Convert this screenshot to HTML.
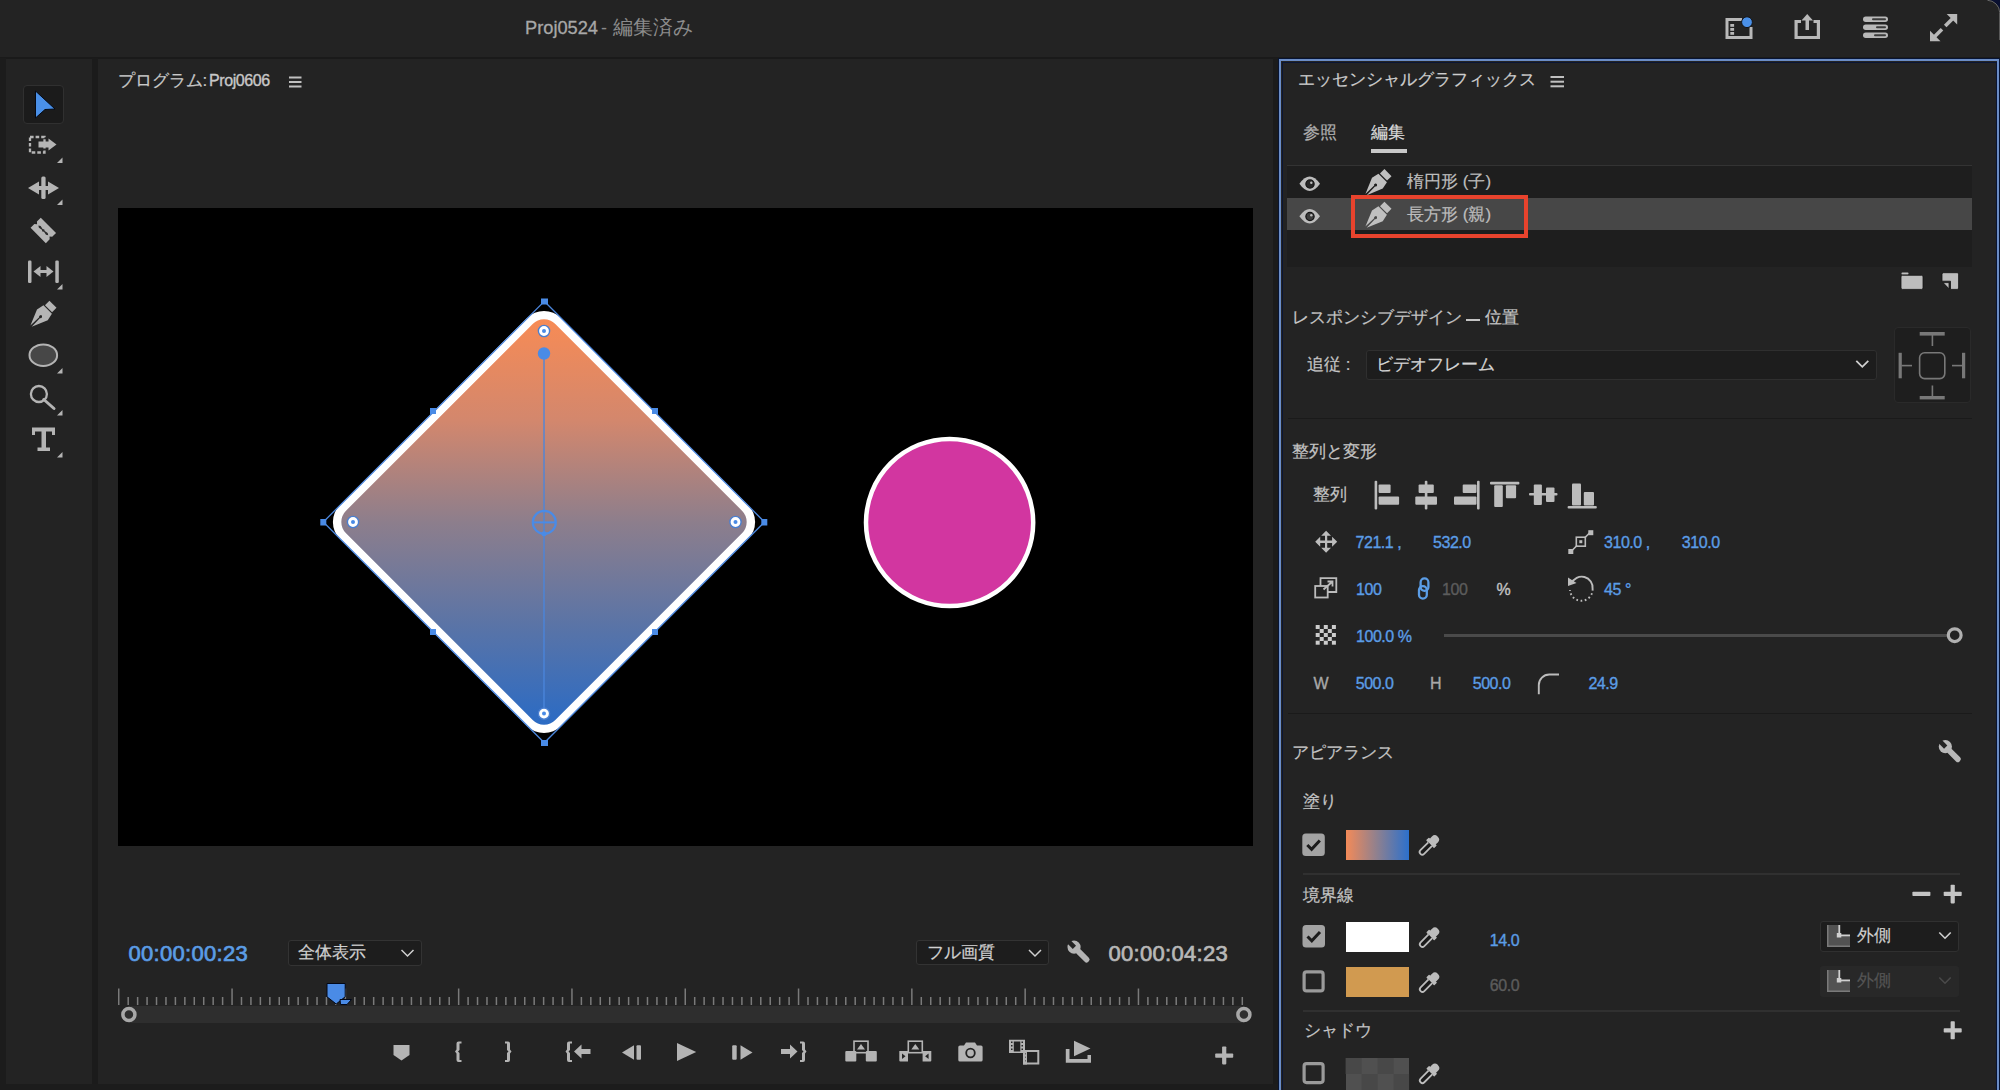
<!DOCTYPE html>
<html lang="ja">
<head>
<meta charset="utf-8">
<style>
*{box-sizing:border-box;margin:0;padding:0}
html,body{width:2000px;height:1090px;overflow:hidden;background:#232323}
body{position:relative;font-family:"Liberation Sans",sans-serif;color:#c4c4c4}
.a{position:absolute}
.t{position:absolute;white-space:nowrap;line-height:1}
svg{position:absolute;overflow:visible}
.blue{color:#5b9de6}
.num{-webkit-text-stroke:0.35px currentColor;letter-spacing:-0.45px}
.lb{-webkit-text-stroke:0.2px currentColor}
</style>
</head>
<body>
<!-- title bar -->
<div class="a" style="left:0;top:0;width:2000px;height:58px;background:#232323"></div>
<div class="a" style="left:0;top:57px;width:2000px;height:2px;background:#1a1a1a"></div>
<div class="t" style="left:524.5px;top:18px;font-size:19px;color:#a8a8a8;-webkit-text-stroke:0.3px #a8a8a8;transform:scaleX(0.96);transform-origin:0 0">Proj0524</div>
<div class="t" style="left:601px;top:19px;font-size:18px;color:#8a8a8a">-</div>
<div class="t" style="left:613px;top:18px;font-size:19.7px;color:#8c8c8c">編集済み</div>

<!-- left strip & dividers -->
<div class="a" style="left:0;top:58px;width:6px;height:1032px;background:#1c1c1c"></div>
<div class="a" style="left:92px;top:58px;width:6px;height:1032px;background:#1b1b1b"></div>
<div class="a" style="left:1273px;top:58px;width:6px;height:1032px;background:#1b1b1b"></div>
<div class="a" style="left:0;top:1084px;width:1279px;height:6px;background:#1c1c1c"></div>


<!-- toolbar -->
<div class="a" style="left:23px;top:85px;width:41px;height:39px;background:#1b1b1b;border:1px solid #303030;border-radius:4px"></div>
<svg style="left:0;top:0" width="100" height="470" viewBox="0 0 100 470">
 <g fill="#b4b4b4" stroke="none">
  <polygon points="35.5,91 55,109 45,109.5 35.5,118" fill="#4a90e8" stroke="#050a14" stroke-width="1"/>
  <!-- track select -->
  <rect x="30" y="137" width="14.5" height="15.5" fill="none" stroke="#b4b4b4" stroke-width="2.3" stroke-dasharray="3.6 2"/>
  <rect x="38.5" y="141.5" width="11" height="6"/>
  <polygon points="48.5,138.5 56.5,144.5 48.5,150.5"/>
  <polygon points="57,163 62.5,163 62.5,157.5"/>
  <!-- ripple -->
  <polygon points="28,188 39,181.5 39,194.5"/>
  <polygon points="59,188 48,181.5 48,194.5"/>
  <rect x="37" y="186" width="13" height="4"/>
  <rect x="41.3" y="176.5" width="4.3" height="22.5" rx="1.5"/>
  <polygon points="57,205 62.5,205 62.5,199.5"/>
  <!-- razor -->
  <g transform="translate(43.3,230.4) rotate(45)">
   <path d="M-10.8,-7.2 H10.8 V-1.8 L8.8,0 L10.8,1.8 V7.2 H-10.8 V1.8 L-8.8,0 L-10.8,-1.8 Z"/>
   <path d="M-7,0 L-5,-1.2 L-1.5,-0.5 L0,-1.4 L1.5,-0.5 L5,-1.2 L7,0 L5,1.2 L1.5,0.5 L0,1.4 L-1.5,0.5 L-5,1.2 Z" fill="#2a2a2a"/>
  </g>
  <!-- slip -->
  <rect x="28" y="260.5" width="3.5" height="22.5" rx="1.2"/>
  <rect x="55.3" y="260.5" width="3.5" height="22.5" rx="1.2"/>
  <polygon points="33.5,271.5 40.5,266 40.5,277"/>
  <polygon points="53.5,271.5 46.5,266 46.5,277"/>
  <rect x="40" y="270" width="7" height="3"/>
  <polygon points="57,289.5 62.5,289.5 62.5,284"/>
  <!-- pen -->
  <g transform="translate(40.6,316.6) rotate(45)">
   <rect x="-5" y="-17.5" width="10" height="6.3"/>
   <path d="M-6,-10 H6 L7.6,-2.5 L0.9,13.5 L0.6,1.4 A1.5,1.5 0 1 0 -0.6,1.4 L-0.9,13.5 L-7.6,-2.5 Z"/>
  </g>
  <!-- ellipse -->
  <ellipse cx="43.3" cy="355.2" rx="13.8" ry="10.8" fill="#474747" stroke="#b4b4b4" stroke-width="2"/>
  <polygon points="57,373.5 62.5,373.5 62.5,368"/>
  <!-- zoom -->
  <circle cx="38.9" cy="394" r="8" fill="none" stroke="#b4b4b4" stroke-width="2.3"/>
  <line x1="43.8" y1="399.5" x2="54" y2="408.5" stroke="#b4b4b4" stroke-width="3" stroke-linecap="round"/>
  <polygon points="57,415.5 62.5,415.5 62.5,410"/>
  <!-- type -->
  <path d="M32,427.5 H55 V435 H52 V431.5 H46 V447.5 H50 V451 H37.5 V447.5 H41.5 V431.5 H35 V435 H32 Z"/>
  <polygon points="57,457.5 62.5,457.5 62.5,452"/>
 </g>
</svg>



<!-- program panel -->
<div class="t lb" style="left:117.5px;top:71.5px;font-size:17px;color:#c8c8c8">プログラム:</div><div class="t" style="left:209px;top:73px;font-size:16px;color:#c8c8c8;letter-spacing:-0.4px;-webkit-text-stroke:0.35px #c8c8c8">Proj0606</div>
<div class="a" style="left:118px;top:208px;width:1135px;height:638px;background:#000"></div>
<svg style="left:0;top:0" width="1280" height="1090" viewBox="0 0 1280 1090">
 <defs>
  <linearGradient id="dg" x1="0" y1="319" x2="0" y2="725" gradientUnits="userSpaceOnUse">
   <stop offset="0" stop-color="#f78b55"/>
   <stop offset="0.25" stop-color="#d3876d"/>
   <stop offset="0.5" stop-color="#8d7e8c"/>
   <stop offset="0.75" stop-color="#5b74a6"/>
   <stop offset="1" stop-color="#2b6bc4"/>
  </linearGradient>
  <linearGradient id="sw" x1="0" y1="0" x2="1" y2="0">
   <stop offset="0" stop-color="#f58a54"/>
   <stop offset="0.5" stop-color="#8b7f90"/>
   <stop offset="1" stop-color="#2a6ecf"/>
  </linearGradient>
 </defs>
 <!-- hamburger -->
 <g fill="#c0c0c0"><rect x="289" y="76.5" width="12.5" height="2"/><rect x="289" y="81" width="12.5" height="2"/><rect x="289" y="85.5" width="12.5" height="2"/></g>
 <!-- diamond -->
 <g transform="translate(544,522) rotate(45)">
  <rect x="-156.3" y="-156.3" width="312.6" height="312.6" rx="24" fill="#fff"/>
 </g>
 <clipPath id="dclip"><rect x="-148" y="-148" width="296" height="296" rx="16" transform="translate(544,522) rotate(45)"/></clipPath>
 <rect x="320" y="300" width="450" height="450" fill="url(#dg)" clip-path="url(#dclip)"/>
 <!-- bbox lines -->
 <polygon points="544.3,301.3 764.5,522 544.3,742.8 323.3,522" fill="none" stroke="#4b86dc" stroke-width="1.3"/>
 <g fill="#4a8be6">
  <rect x="541" y="298.5" width="7" height="6"/>
  <rect x="320.3" y="519" width="6" height="6.5"/>
  <rect x="761.3" y="519" width="6" height="6.5"/>
  <rect x="541" y="740" width="7" height="6"/>
  <rect x="430" y="408" width="6" height="6"/>
  <rect x="652" y="408" width="6" height="6"/>
  <rect x="430" y="629" width="6" height="6"/>
  <rect x="652" y="629" width="6" height="6"/>
 </g>
 <!-- gradient line -->
 <line x1="544" y1="354" x2="544" y2="713" stroke="#4b86dc" stroke-width="1.6" opacity="0.85"/>
 <circle cx="544" cy="353.5" r="6.2" fill="#4a8be6"/>
 <circle cx="544.3" cy="522.4" r="11.5" fill="none" stroke="#4a8be6" stroke-width="2.2"/>
 <line x1="533" y1="522.4" x2="555.5" y2="522.4" stroke="#4a8be6" stroke-width="2"/>
 <circle cx="544" cy="533.7" r="2.5" fill="#4a8be6"/>
 <g fill="#fff" stroke="#4a7fd0" stroke-width="1.4">
  <circle cx="544" cy="331" r="5.6"/><circle cx="353" cy="522" r="5.6"/><circle cx="735.5" cy="522" r="5.6"/><circle cx="544" cy="713.6" r="5.6"/>
 </g>
 <g fill="#4a8be6"><circle cx="544" cy="331" r="2"/><circle cx="353" cy="522" r="2"/><circle cx="735.5" cy="522" r="2"/><circle cx="544" cy="713.6" r="2"/></g>
 <!-- circle -->
 <circle cx="949.6" cy="522.5" r="83.6" fill="#d236a0" stroke="#fff" stroke-width="4.5"/>
</svg>



<!-- program bottom -->
<div class="t" style="left:128.5px;top:943px;font-size:22px;color:#5b9de6;-webkit-text-stroke:0.7px #5b9de6;letter-spacing:0.3px">00:00:00:23</div>
<div class="a" style="left:287.5px;top:940px;width:134.5px;height:25.5px;background:#1d1d1d;border:1px solid #333;border-radius:3px"></div>
<div class="t lb" style="left:298px;top:944px;font-size:17px;color:#d0d0d0">全体表示</div>
<div class="a" style="left:915.5px;top:939.5px;width:133.5px;height:25.5px;background:#1d1d1d;border:1px solid #333;border-radius:3px"></div>
<div class="t lb" style="left:926.5px;top:944px;font-size:17px;color:#d0d0d0">フル画質</div>
<div class="t" style="left:1108.5px;top:943px;font-size:22px;color:#b8b8b8;-webkit-text-stroke:0.7px #b8b8b8;letter-spacing:0.3px">00:00:04:23</div>
<div class="a" style="left:129px;top:1006px;width:1115px;height:17px;background:#2e2e2e"></div>
<svg style="left:0;top:0" width="1280" height="1090" viewBox="0 0 1280 1090">
 <g fill="none" stroke="#d0d0d0" stroke-width="1.5"><polyline points="401.5,950 407.5,956 413.5,950"/><polyline points="1029,950 1035,956 1041,950"/></g>
 <g fill="#7a7a7a"><rect x="118.00" y="988.5" width="1.5" height="16.5"/><rect x="127.44" y="997" width="1.5" height="8.0"/><rect x="136.88" y="997" width="1.5" height="8.0"/><rect x="146.32" y="997" width="1.5" height="8.0"/><rect x="155.77" y="997" width="1.5" height="8.0"/><rect x="165.21" y="997" width="1.5" height="8.0"/><rect x="174.65" y="997" width="1.5" height="8.0"/><rect x="184.09" y="997" width="1.5" height="8.0"/><rect x="193.53" y="997" width="1.5" height="8.0"/><rect x="202.97" y="997" width="1.5" height="8.0"/><rect x="212.42" y="997" width="1.5" height="8.0"/><rect x="221.86" y="997" width="1.5" height="8.0"/><rect x="231.30" y="988.5" width="1.5" height="16.5"/><rect x="240.74" y="997" width="1.5" height="8.0"/><rect x="250.18" y="997" width="1.5" height="8.0"/><rect x="259.62" y="997" width="1.5" height="8.0"/><rect x="269.07" y="997" width="1.5" height="8.0"/><rect x="278.51" y="997" width="1.5" height="8.0"/><rect x="287.95" y="997" width="1.5" height="8.0"/><rect x="297.39" y="997" width="1.5" height="8.0"/><rect x="306.83" y="997" width="1.5" height="8.0"/><rect x="316.27" y="997" width="1.5" height="8.0"/><rect x="325.72" y="997" width="1.5" height="8.0"/><rect x="335.16" y="997" width="1.5" height="8.0"/><rect x="344.60" y="988.5" width="1.5" height="16.5"/><rect x="354.04" y="997" width="1.5" height="8.0"/><rect x="363.48" y="997" width="1.5" height="8.0"/><rect x="372.92" y="997" width="1.5" height="8.0"/><rect x="382.37" y="997" width="1.5" height="8.0"/><rect x="391.81" y="997" width="1.5" height="8.0"/><rect x="401.25" y="997" width="1.5" height="8.0"/><rect x="410.69" y="997" width="1.5" height="8.0"/><rect x="420.13" y="997" width="1.5" height="8.0"/><rect x="429.57" y="997" width="1.5" height="8.0"/><rect x="439.02" y="997" width="1.5" height="8.0"/><rect x="448.46" y="997" width="1.5" height="8.0"/><rect x="457.90" y="988.5" width="1.5" height="16.5"/><rect x="467.34" y="997" width="1.5" height="8.0"/><rect x="476.78" y="997" width="1.5" height="8.0"/><rect x="486.22" y="997" width="1.5" height="8.0"/><rect x="495.67" y="997" width="1.5" height="8.0"/><rect x="505.11" y="997" width="1.5" height="8.0"/><rect x="514.55" y="997" width="1.5" height="8.0"/><rect x="523.99" y="997" width="1.5" height="8.0"/><rect x="533.43" y="997" width="1.5" height="8.0"/><rect x="542.88" y="997" width="1.5" height="8.0"/><rect x="552.32" y="997" width="1.5" height="8.0"/><rect x="561.76" y="997" width="1.5" height="8.0"/><rect x="571.20" y="988.5" width="1.5" height="16.5"/><rect x="580.64" y="997" width="1.5" height="8.0"/><rect x="590.08" y="997" width="1.5" height="8.0"/><rect x="599.53" y="997" width="1.5" height="8.0"/><rect x="608.97" y="997" width="1.5" height="8.0"/><rect x="618.41" y="997" width="1.5" height="8.0"/><rect x="627.85" y="997" width="1.5" height="8.0"/><rect x="637.29" y="997" width="1.5" height="8.0"/><rect x="646.73" y="997" width="1.5" height="8.0"/><rect x="656.18" y="997" width="1.5" height="8.0"/><rect x="665.62" y="997" width="1.5" height="8.0"/><rect x="675.06" y="997" width="1.5" height="8.0"/><rect x="684.50" y="988.5" width="1.5" height="16.5"/><rect x="693.94" y="997" width="1.5" height="8.0"/><rect x="703.38" y="997" width="1.5" height="8.0"/><rect x="712.83" y="997" width="1.5" height="8.0"/><rect x="722.27" y="997" width="1.5" height="8.0"/><rect x="731.71" y="997" width="1.5" height="8.0"/><rect x="741.15" y="997" width="1.5" height="8.0"/><rect x="750.59" y="997" width="1.5" height="8.0"/><rect x="760.03" y="997" width="1.5" height="8.0"/><rect x="769.48" y="997" width="1.5" height="8.0"/><rect x="778.92" y="997" width="1.5" height="8.0"/><rect x="788.36" y="997" width="1.5" height="8.0"/><rect x="797.80" y="988.5" width="1.5" height="16.5"/><rect x="807.24" y="997" width="1.5" height="8.0"/><rect x="816.68" y="997" width="1.5" height="8.0"/><rect x="826.13" y="997" width="1.5" height="8.0"/><rect x="835.57" y="997" width="1.5" height="8.0"/><rect x="845.01" y="997" width="1.5" height="8.0"/><rect x="854.45" y="997" width="1.5" height="8.0"/><rect x="863.89" y="997" width="1.5" height="8.0"/><rect x="873.33" y="997" width="1.5" height="8.0"/><rect x="882.78" y="997" width="1.5" height="8.0"/><rect x="892.22" y="997" width="1.5" height="8.0"/><rect x="901.66" y="997" width="1.5" height="8.0"/><rect x="911.10" y="988.5" width="1.5" height="16.5"/><rect x="920.54" y="997" width="1.5" height="8.0"/><rect x="929.98" y="997" width="1.5" height="8.0"/><rect x="939.43" y="997" width="1.5" height="8.0"/><rect x="948.87" y="997" width="1.5" height="8.0"/><rect x="958.31" y="997" width="1.5" height="8.0"/><rect x="967.75" y="997" width="1.5" height="8.0"/><rect x="977.19" y="997" width="1.5" height="8.0"/><rect x="986.63" y="997" width="1.5" height="8.0"/><rect x="996.08" y="997" width="1.5" height="8.0"/><rect x="1005.52" y="997" width="1.5" height="8.0"/><rect x="1014.96" y="997" width="1.5" height="8.0"/><rect x="1024.40" y="988.5" width="1.5" height="16.5"/><rect x="1033.84" y="997" width="1.5" height="8.0"/><rect x="1043.28" y="997" width="1.5" height="8.0"/><rect x="1052.73" y="997" width="1.5" height="8.0"/><rect x="1062.17" y="997" width="1.5" height="8.0"/><rect x="1071.61" y="997" width="1.5" height="8.0"/><rect x="1081.05" y="997" width="1.5" height="8.0"/><rect x="1090.49" y="997" width="1.5" height="8.0"/><rect x="1099.93" y="997" width="1.5" height="8.0"/><rect x="1109.38" y="997" width="1.5" height="8.0"/><rect x="1118.82" y="997" width="1.5" height="8.0"/><rect x="1128.26" y="997" width="1.5" height="8.0"/><rect x="1137.70" y="988.5" width="1.5" height="16.5"/><rect x="1147.14" y="997" width="1.5" height="8.0"/><rect x="1156.58" y="997" width="1.5" height="8.0"/><rect x="1166.03" y="997" width="1.5" height="8.0"/><rect x="1175.47" y="997" width="1.5" height="8.0"/><rect x="1184.91" y="997" width="1.5" height="8.0"/><rect x="1194.35" y="997" width="1.5" height="8.0"/><rect x="1203.79" y="997" width="1.5" height="8.0"/><rect x="1213.23" y="997" width="1.5" height="8.0"/><rect x="1222.68" y="997" width="1.5" height="8.0"/><rect x="1232.12" y="997" width="1.5" height="8.0"/><rect x="1241.56" y="997" width="1.5" height="8.0"/></g>
 <path d="M327,983.5 H345.2 V996.8 L336.2,1004 L327,996.8 Z" fill="#4a8be6" stroke="#020818" stroke-width="1"/><path d="M340,999.5 L351.5,999.5 L347,1004.5 L340.5,1004.5 Z" fill="#4a8be6" stroke="#020818" stroke-width="1"/>
 <circle cx="128.9" cy="1014.6" r="6" fill="#2e2e2e" stroke="#a8a8a8" stroke-width="3.5"/>
 <circle cx="1243.9" cy="1014.6" r="6" fill="#2e2e2e" stroke="#a8a8a8" stroke-width="3.5"/>
 <!-- wrench -->
 <g transform="translate(1079,952) rotate(-45)">
  <circle cx="0" cy="-7" r="6.6" fill="#b4b4b4"/>
  <rect x="-2.3" y="-14.5" width="4.6" height="8" fill="#232323"/>
  <rect x="-2.9" y="-3" width="5.8" height="16.5" rx="2.5" fill="#b4b4b4"/>
 </g>
 <!-- transport -->
 <g fill="#b4b4b4">
  <path d="M393.5,1045 H409.5 V1055 L401.5,1060.5 L393.5,1055 Z"/>
  <path d="M461.5,1041.5 H458.5 Q456.5,1041.5 456.5,1043.5 V1049.5 L455,1051.5 L456.5,1053.5 V1060 Q456.5,1062 458.5,1062 H461.5 V1060 H459.5 V1053 L458,1051.5 L459.5,1050 V1043.5 H461.5 Z"/>
  <path d="M505,1041.5 H508 Q510,1041.5 510,1043.5 V1049.5 L511.5,1051.5 L510,1053.5 V1060 Q510,1062 508,1062 H505 V1060 H507 V1053 L508.5,1051.5 L507,1050 V1043.5 H505 Z"/>
  <path d="M572,1041.5 H569 Q567,1041.5 567,1043.5 V1049.5 L565.5,1051.5 L567,1053.5 V1060 Q567,1062 569,1062 H572 V1060 H570 V1053 L568.5,1051.5 L570,1050 V1043.5 H572 Z"/>
  <path d="M574,1051.5 L581.5,1044.5 V1049 H590.5 V1054 H581.5 V1058.5 Z"/>
  <path d="M622,1052.5 L634,1045.3 V1059.7 Z"/><rect x="636.5" y="1045.3" width="4.5" height="14.5" rx="1"/>
  <path d="M677,1043 L696.2,1052 L677,1061 Z"/>
  <rect x="732.2" y="1045.3" width="4.5" height="14.5" rx="1"/><path d="M740.5,1045.3 L752.5,1052.5 L740.5,1059.7 Z"/>
  <path d="M778.5,1051.5 L786,1044.5 V1049 H795 V1054 H786 V1058.5 Z" transform="translate(1576,0) scale(-1,1)"/>
  <path d="M800,1041.5 H803 Q805,1041.5 805,1043.5 V1049.5 L806.5,1051.5 L805,1053.5 V1060 Q805,1062 803,1062 H800 V1060 H802 V1053 L803.5,1051.5 L802,1050 V1043.5 H800 Z"/>
  <!-- lift -->
  <rect x="845.3" y="1051" width="11" height="10.5" rx="1"/><rect x="865.8" y="1051" width="11" height="10.5" rx="1"/>
  <rect x="854" y="1041.2" width="14" height="11.5" fill="none" stroke="#b4b4b4" stroke-width="1.6"/>
  <path d="M861,1044 L865,1049.5 H857 Z"/>
  <!-- extract -->
  <path d="M899.3,1051 H908 V1061.5 H900.3 Q899.3,1061.5 899.3,1060.5 Z M902,1053.5 V1059 L905.5,1056.25 Z" fill-rule="evenodd"/>
  <path d="M931.3,1051 H922.6 V1061.5 H930.3 Q931.3,1061.5 931.3,1060.5 Z M928.6,1053.5 V1059 L925.1,1056.25 Z" fill-rule="evenodd"/>
  <rect x="908.3" y="1041.2" width="14" height="11.5" fill="none" stroke="#b4b4b4" stroke-width="1.6"/>
  <path d="M915.3,1044 L919.3,1049.5 H911.3 Z"/>
  <!-- camera -->
  <path d="M958.3,1047 Q958.3,1045.5 960,1045.5 H964 L966,1042.6 H975 L977,1045.5 H981 Q982.6,1045.5 982.6,1047 V1060 Q982.6,1061.5 981,1061.5 H960 Q958.3,1061.5 958.3,1060 Z"/><circle cx="970.5" cy="1053" r="4.3" fill="none" stroke="#232323" stroke-width="1.8"/>
  <!-- compare -->
  <path d="M1009,1039.8 H1025 V1053 H1009 Z M1011,1041.5 V1043 H1012.5 V1041.5 Z M1011,1045 V1046.5 H1012.5 V1045 Z M1011,1048.5 V1050 H1012.5 V1048.5 Z M1021.5,1041.5 V1043 H1023 V1041.5 Z M1021.5,1045 V1046.5 H1023 V1045 Z M1021.5,1048.5 V1050 H1023 V1048.5 Z M1013.8,1041.5 V1051.5 H1020.3 V1041.5 Z" fill-rule="evenodd"/>
  <path d="M1023,1050 H1039.3 V1064.4 H1023 Z M1025,1052 V1062.4 H1037.3 V1052 Z" fill-rule="evenodd"/>
  <path d="M1023,1050 H1027 V1064.4 H1023 Z M1024.5,1053 V1054.5 H1025.5 V1053 Z M1024.5,1056.5 V1058 H1025.5 V1056.5 Z M1024.5,1060 V1061.5 H1025.5 V1060 Z" fill-rule="evenodd"/>
  <!-- export -->
  <path d="M1065.8,1049 H1069.5 V1059 H1087.5 V1055 H1091 V1062.8 H1065.8 Z"/>
  <path d="M1074,1040.8 L1090.5,1048.5 L1074,1056.3 Z"/>
  <!-- plus -->
  <rect x="1215.2" y="1053.5" width="18" height="4.2" rx="0.8"/><rect x="1222.1" y="1046.4" width="4.2" height="18" rx="0.8"/>
 </g>
</svg>

<!-- right panel border -->
<div class="a" style="left:1278px;top:58px;width:722px;height:1040px;border:1px solid #071433"></div>
<div class="a" style="left:1279px;top:59px;width:720px;height:1040px;border:2.5px solid #6b8dc6"></div>
<div class="a" style="left:1281.5px;top:61.5px;width:715px;height:1040px;border:0.8px solid #0a1534"></div>


<!-- right panel content -->
<div class="t lb" style="left:1298px;top:71px;font-size:17px;color:#cdcdcd">エッセンシャルグラフィックス</div>
<div class="t lb" style="left:1303px;top:124px;font-size:17px;color:#b0b0b0">参照</div>
<div class="t lb" style="left:1371px;top:124px;font-size:17px;color:#d8d8d8">編集</div>
<div class="a" style="left:1371px;top:149px;width:36px;height:4px;background:#c8c8c8"></div>
<!-- layer list -->
<div class="a" style="left:1287px;top:165px;width:685px;height:101.5px;background:#1e1e1e"></div>
<div class="a" style="left:1287px;top:165px;width:685px;height:1px;background:#333"></div>
<div class="a" style="left:1287px;top:198px;width:685px;height:32px;background:#474747"></div>
<div class="t lb" style="left:1407px;top:173px;font-size:17px;color:#bdbdbd">楕円形 (子)</div>
<div class="t lb" style="left:1407px;top:206px;font-size:17px;color:#bdbdbd">長方形 (親)</div>
<div class="a" style="left:1350.5px;top:195px;width:177px;height:43px;border:4.5px solid #e8432d"></div>
<!-- responsive -->
<div class="t lb" style="left:1291.5px;top:309px;font-size:17px;color:#c4c4c4">レスポンシブデザイン</div>
<div class="a" style="left:1466px;top:318.6px;width:14px;height:2px;background:#c4c4c4"></div>
<div class="t lb" style="left:1485px;top:309px;font-size:17px;color:#c4c4c4">位置</div>
<div class="t lb" style="left:1307px;top:356px;font-size:17px;color:#c4c4c4">追従 :</div>
<div class="a" style="left:1365.5px;top:350px;width:511px;height:29.5px;background:#1d1d1d;border:1px solid #2f2f2f;border-radius:3px"></div>
<div class="t lb" style="left:1375.5px;top:356px;font-size:17px;color:#d4d4d4">ビデオフレーム</div>
<div class="a" style="left:1893.5px;top:327px;width:77.5px;height:75.5px;background:#1e1e1e;border:1px solid #2a2a2a;border-radius:4px"></div>
<div class="a" style="left:1288px;top:417.5px;width:684px;height:1.5px;background:#1a1a1a"></div>
<!-- align & transform -->
<div class="t lb" style="left:1291.5px;top:443px;font-size:17px;color:#c4c4c4">整列と変形</div>
<div class="t lb" style="left:1312.5px;top:486px;font-size:17px;color:#c4c4c4">整列</div>
<div class="t num blue" style="left:1355.5px;top:535px;font-size:16px">721.1 ,</div>
<div class="t num blue" style="left:1433px;top:535px;font-size:16px">532.0</div>
<div class="t num blue" style="left:1604px;top:535px;font-size:16px">310.0 ,</div>
<div class="t num blue" style="left:1681.8px;top:535px;font-size:16px">310.0</div>
<div class="t num blue" style="left:1356px;top:582px;font-size:16px">100</div>
<div class="t num" style="left:1442px;top:582px;font-size:16px;color:#5c5c5c">100</div>
<div class="t num" style="left:1496.5px;top:582px;font-size:16px;color:#c4c4c4">%</div>
<div class="t num blue" style="left:1604px;top:582px;font-size:16px">45 °</div>
<div class="t num blue" style="left:1356px;top:629px;font-size:16px">100.0 %</div>
<div class="t num" style="left:1313.5px;top:676px;font-size:16px;color:#a8a8a8">W</div>
<div class="t num blue" style="left:1355.7px;top:676px;font-size:16px">500.0</div>
<div class="t num" style="left:1430px;top:676px;font-size:16px;color:#a8a8a8">H</div>
<div class="t num blue" style="left:1472.7px;top:676px;font-size:16px">500.0</div>
<div class="t num blue" style="left:1588.4px;top:676px;font-size:16px">24.9</div>
<div class="a" style="left:1443.9px;top:633.7px;width:1503px;height:3px;background:#4a4a4a;width:503px"></div>
<div class="a" style="left:1288px;top:712.5px;width:684px;height:1.5px;background:#1a1a1a"></div>
<!-- appearance -->
<div class="t lb" style="left:1292px;top:744px;font-size:17px;color:#c4c4c4">アピアランス</div>
<div class="t lb" style="left:1302.5px;top:793px;font-size:17px;color:#c4c4c4">塗り</div>
<div class="a" style="left:1345.7px;top:830px;width:63px;height:30.2px;background:linear-gradient(90deg,#f38a58 0%,#8d8090 50%,#2c70cc 100%)"></div>
<div class="a" style="left:1302.5px;top:873px;width:657.5px;height:1.5px;background:#303030"></div>
<div class="t lb" style="left:1302.6px;top:887px;font-size:17px;color:#c4c4c4">境界線</div>
<div class="a" style="left:1345.6px;top:921.5px;width:63.5px;height:30.8px;background:#fff"></div>
<div class="t num blue" style="left:1489.8px;top:932.5px;font-size:16px">14.0</div>
<div class="a" style="left:1345.6px;top:967px;width:63.5px;height:30.2px;background:#d19a50"></div>
<div class="t num" style="left:1489.8px;top:977.5px;font-size:16px;color:#5c5c5c">60.0</div>
<div class="a" style="left:1820px;top:921px;width:139.3px;height:30.6px;background:#1d1d1d;border:1px solid #303030;border-radius:3px"></div>
<div class="t lb" style="left:1857.4px;top:927px;font-size:17px;color:#d0d0d0">外側</div>
<div class="a" style="left:1820px;top:966.2px;width:139.3px;height:30.5px;background:#282828;border-radius:3px"></div>
<div class="t lb" style="left:1857.4px;top:972px;font-size:17px;color:#555">外側</div>
<div class="a" style="left:1302.5px;top:1010px;width:657.5px;height:1.5px;background:#303030"></div>
<div class="t lb" style="left:1304.2px;top:1022px;font-size:17px;color:#c4c4c4">シャドウ</div>
<div class="a" style="left:1345.6px;top:1058px;width:63.5px;height:40px;background:#505050"></div>


<svg style="left:0;top:0" width="2000" height="1090" viewBox="0 0 2000 1090">
 <!-- top right icons -->
 <g fill="#b8b8b8">
  <path d="M1725.5,18 H1742 V21 H1728.5 V36 H1749.5 V27 H1752.5 V39 H1725.5 Z"/>
  <rect x="1730.3" y="24" width="3.8" height="2.8"/><rect x="1730.3" y="28" width="3.8" height="2.8"/><rect x="1730.3" y="32" width="3.8" height="2.8"/>
 </g>
 <circle cx="1747" cy="22.2" r="5.4" fill="#4a90e8" stroke="#141414" stroke-width="1"/>
 <g fill="#b8b8b8">
  <path d="M1794.5,20 H1801 V23 H1797.7 V36 H1816.8 V23 H1813.5 V20 H1820 V39 H1794.5 Z"/>
  <path d="M1807.2,14 L1813,20.5 H1809 V30 H1805.5 V20.5 H1801.5 Z"/>
 </g>
 <g>
  <rect x="1863" y="16.5" width="25" height="5.5" rx="2.75" fill="#b8b8b8"/><rect x="1872" y="18.2" width="14" height="2" rx="1" fill="#3a3a3a"/>
  <rect x="1863" y="24.5" width="25" height="5.5" rx="2.75" fill="#b8b8b8"/><rect x="1876" y="26.2" width="10" height="2" rx="1" fill="#3a3a3a"/>
  <rect x="1863" y="32.5" width="25" height="5.5" rx="2.75" fill="#b8b8b8"/><rect x="1874" y="34.2" width="12" height="2" rx="1" fill="#3a3a3a"/>
 </g>
 <g fill="#b8b8b8">
  <path d="M1957.2,14 V24.5 L1946.7,14 Z"/><line x1="1953" y1="18.2" x2="1945.2" y2="26" stroke="#b8b8b8" stroke-width="3.6"/>
  <path d="M1930,41.2 V30.7 L1940.5,41.2 Z"/><line x1="1934.2" y1="37" x2="1942" y2="29.2" stroke="#b8b8b8" stroke-width="3.6"/>
 </g>
 <path d="M1987,0 A13,13 0 0 1 2000,13 V0 Z" fill="#0a1030"/>
 <path d="M1987.5,0.3 A12.5,12.5 0 0 1 1999.7,12.5 V40" fill="none" stroke="#666" stroke-width="1"/>
 <!-- panel hamburger -->
 <g fill="#c0c0c0"><rect x="1550.5" y="76" width="13.5" height="2"/><rect x="1550.5" y="80.7" width="13.5" height="2"/><rect x="1550.5" y="85.3" width="13.5" height="2"/></g>
 <!-- eyes -->
 <path d="M1299.4,183.8 Q1309.7,169.3 1320.0,183.8 Q1309.7,198.3 1299.4,183.8 Z" fill="#bcbcbc"/>
  <circle cx="1310.0" cy="184.0" r="4.1" fill="#262626" stroke="#151515" stroke-width="1.3"/>
  <circle cx="1311.3" cy="182.8" r="1.2" fill="#bcbcbc"/>
 <path d="M1299.4,216.3 Q1309.7,201.8 1320.0,216.3 Q1309.7,230.8 1299.4,216.3 Z" fill="#bcbcbc"/>
  <circle cx="1310.0" cy="216.5" r="4.1" fill="#3c3c3c" stroke="#151515" stroke-width="1.3"/>
  <circle cx="1311.3" cy="215.3" r="1.2" fill="#bcbcbc"/>
 <!-- pens -->
 <g transform="translate(1375.6,185) rotate(45) scale(1.0)">
   <rect x="-5" y="-17.5" width="10" height="6.3" fill="#c0c0c0"/>
   <path d="M-6,-10 H6 L7.6,-2.5 L0.9,13.5 L0.6,1.4 A1.5,1.5 0 1 0 -0.6,1.4 L-0.9,13.5 L-7.6,-2.5 Z" fill="#c0c0c0"/>
  </g>
 <g transform="translate(1375.6,217.6) rotate(45) scale(1.0)">
   <rect x="-5" y="-17.5" width="10" height="6.3" fill="#c0c0c0"/>
   <path d="M-6,-10 H6 L7.6,-2.5 L0.9,13.5 L0.6,1.4 A1.5,1.5 0 1 0 -0.6,1.4 L-0.9,13.5 L-7.6,-2.5 Z" fill="#c0c0c0"/>
  </g>
 <!-- folder / new item -->
 <rect x="1901.5" y="272.5" width="7" height="2" rx="0.8" fill="#bdbdbd"/><path d="M1901,276.8 Q1901,275.3 1902.5,275.3 H1921.5 Q1923,275.3 1923,276.8 V288 Q1923,289.4 1921.5,289.4 H1902.5 Q1901,289.4 1901,288 Z" fill="#bdbdbd" stroke="#111" stroke-width="0.8"/>
 <path d="M1943.5,272.7 H1957.2 Q1958.6,272.7 1958.6,274.1 V288 Q1958.6,289.4 1957.2,289.4 H1950.5 V281.2 H1942 V274.2 Q1942,272.7 1943.5,272.7 Z" fill="#bdbdbd" stroke="#111" stroke-width="0.8"/>
 <path d="M1943,282.6 H1949 V288.8 Z" fill="#bdbdbd" stroke="#111" stroke-width="0.8"/>
 <!-- dropdown chevron -->
 <polyline points="1856.3,360.8 1862.3,366.8 1868.3,360.8" fill="none" stroke="#d0d0d0" stroke-width="1.8"/>
 <!-- pin widget -->
 <g fill="#787878">
  <rect x="1919.7" y="332" width="25" height="3.6"/><rect x="1931.6" y="335" width="1.6" height="11"/>
  <rect x="1919.7" y="396" width="25" height="3.4"/><rect x="1931.6" y="385.5" width="1.6" height="11"/>
  <rect x="1898.6" y="352.8" width="3.2" height="25.5"/><rect x="1901.5" y="364.8" width="10.5" height="1.6"/>
  <rect x="1962" y="352.8" width="3.2" height="25.5"/><rect x="1952" y="364.8" width="10.5" height="1.6"/>
 </g>
 <rect x="1919.6" y="352.8" width="25.2" height="25.8" rx="5" fill="none" stroke="#787878" stroke-width="1.6"/>
 <!-- align -->
 <g fill="#bcbcbc"><rect x="1374.6" y="480.8" width="2.6" height="28.8" rx="1"/><rect x="1378.6" y="484.4" width="12" height="8.6" rx="1"/><rect x="1378.6" y="496.6" width="20.5" height="8.2" rx="1"/><rect x="1424.8" y="480.8" width="2.6" height="28.8" rx="1"/><rect x="1418.6" y="484.4" width="15.2" height="8.6" rx="1"/><rect x="1415.3" y="496.6" width="21.7" height="8.2" rx="1"/><rect x="1477" y="480.8" width="2.6" height="28.8" rx="1"/><rect x="1462.7" y="484.4" width="13.8" height="8.6" rx="1"/><rect x="1454" y="496.6" width="22.5" height="8.2" rx="1"/><rect x="1490" y="481.8" width="29.4" height="2.6" rx="1"/><rect x="1494.2" y="485.3" width="8.6" height="21.7" rx="1"/><rect x="1505.9" y="485.3" width="10.2" height="13" rx="1"/><rect x="1529" y="493" width="28.5" height="2.6" rx="1"/><rect x="1533.8" y="484.4" width="8.1" height="20.6" rx="1"/><rect x="1546" y="487.5" width="8.5" height="14.5" rx="1"/><rect x="1567.6" y="506" width="29.2" height="2.6" rx="1"/><rect x="1572" y="483.5" width="9" height="22" rx="1"/><rect x="1583.8" y="492" width="10.2" height="13.5" rx="1"/></g>
 <!-- move icon -->
 <g fill="#bcbcbc">
  <path d="M1326.1,530.8 L1331,535.8 H1327.2 V540.6 H1332.1 V536.8 L1337.2,541.8 L1332.1,546.8 V543 H1327.2 V547.8 H1331 L1326.1,552.8 L1321.2,547.8 H1325 V543 H1320.2 V546.8 L1315.2,541.8 L1320.2,536.8 V540.6 H1325 V535.8 H1321.2 Z"/>
 </g>
 <!-- anchor icon -->
 <g fill="#bcbcbc">
  <rect x="1568.3" y="549" width="5" height="5" /><rect x="1588.3" y="530.2" width="5" height="5"/>
  <line x1="1572" y1="550.5" x2="1577" y2="545.5" stroke="#bcbcbc" stroke-width="1.6"/>
  <line x1="1584.8" y1="537.7" x2="1589.5" y2="533" stroke="#bcbcbc" stroke-width="1.6"/>
  <rect x="1576.3" y="537.2" width="9" height="9" fill="none" stroke="#bcbcbc" stroke-width="1.6"/>
  <rect x="1579.3" y="540.2" width="3" height="3"/>
 </g>
 <!-- scale icon -->
 <g fill="none" stroke="#bcbcbc" stroke-width="1.8">
  <rect x="1315.2" y="586" width="12.5" height="11.5"/>
  <path d="M1320.5,586 V578.2 H1336.3 V592 H1327.7"/>
  <path d="M1323.5,589.5 L1332.5,581.5 M1327.5,581.5 H1332.5 V586.5"/>
 </g>
 <!-- link icon -->
 <g fill="none" stroke="#5b9de6" stroke-width="2.3">
  <rect x="1420.6" y="578.3" width="7.8" height="12.5" rx="3.9"/>
  <rect x="1419" y="586.2" width="7.8" height="12.5" rx="3.9"/>
 </g>
 <!-- rotation icon -->
 <g fill="none" stroke="#bcbcbc" stroke-width="1.9">
  <path d="M1571.5,583.5 A11,11 0 0 1 1592.6,589"/>
  <path d="M1592.6,589 A11,11 0 0 1 1570,590" stroke-dasharray="1.7 2.6"/>
 </g>
 <path d="M1568,586 L1568,577.5 L1576.5,583 Z" fill="#bcbcbc"/>
 <!-- checker -->
 <g fill="#cccccc">
  <rect x="1315.7" y="625" width="20.2" height="19.7" fill="#262626"/>
  <rect x="1315.7" y="625" width="4" height="4"/><rect x="1323.8" y="625" width="4" height="4"/><rect x="1331.9" y="625" width="4" height="4"/>
  <rect x="1319.7" y="629" width="4" height="4"/><rect x="1327.8" y="629" width="4" height="4"/>
  <rect x="1315.7" y="633" width="4" height="4"/><rect x="1323.8" y="633" width="4" height="4"/><rect x="1331.9" y="633" width="4" height="4"/>
  <rect x="1319.7" y="637" width="4" height="4"/><rect x="1327.8" y="637" width="4" height="4"/>
  <rect x="1315.7" y="640.7" width="4" height="4"/><rect x="1323.8" y="640.7" width="4" height="4"/><rect x="1331.9" y="640.7" width="4" height="4"/>
 </g>
 <!-- slider knob -->
 <circle cx="1954.7" cy="635.2" r="6.4" fill="#232323" stroke="#b0b0b0" stroke-width="3.2"/>
 <!-- corner radius icon -->
 <path d="M1538.8,694.2 V685 A10.5,10.5 0 0 1 1549.3,674.5 H1559" fill="none" stroke="#bcbcbc" stroke-width="1.9"/>
 <!-- wrench -->
 <g transform="translate(1950.3,751.6) rotate(-45)">
  <circle cx="0" cy="-7" r="6.6" fill="#b8b8b8"/>
  <rect x="-2.3" y="-14.5" width="4.6" height="8" fill="#232323"/>
  <rect x="-2.9" y="-3" width="5.8" height="16.5" rx="2.5" fill="#b8b8b8"/>
 </g>
 <!-- checkboxes -->
 <rect x="1302.3" y="833.5" width="22.5" height="22.5" rx="3.5" fill="#a3a3a3"/>
  <polyline points="1307.3,845.0 1311.6,849.3 1319.8,840.5" fill="none" stroke="#1c1c1c" stroke-width="3"/>
 <rect x="1302.5" y="925" width="22.5" height="22.5" rx="3.5" fill="#a3a3a3"/>
  <polyline points="1307.5,936.5 1311.8,940.8 1320.0,932" fill="none" stroke="#1c1c1c" stroke-width="3"/>
 <rect x="1304.1" y="971.9" width="19" height="19" rx="2.5" fill="none" stroke="#9a9a9a" stroke-width="3.2"/>
 <rect x="1304.1" y="1063.6" width="19" height="19" rx="2.5" fill="none" stroke="#9a9a9a" stroke-width="3.2"/>
 <!-- droppers -->
 <g transform="translate(1428.5,845.8) rotate(45)">
   <rect x="-4.2" y="-13" width="8.4" height="10" rx="4" fill="#bcbcbc"/>
   <rect x="-5.6" y="-6.2" width="11.2" height="4" rx="0.6" fill="#bcbcbc"/>
   <path d="M-2.6,-2.4 V8.8 A2.6,2.6 0 0 0 2.6,8.8 V-2.4" fill="#1a1a1a" stroke="#bcbcbc" stroke-width="1.8"/>
   <rect x="-5.1" y="-5.6" width="10.2" height="2.8" fill="#bcbcbc"/>
  </g>
 <g transform="translate(1428.7,938.0) rotate(45)">
   <rect x="-4.2" y="-13" width="8.4" height="10" rx="4" fill="#bcbcbc"/>
   <rect x="-5.6" y="-6.2" width="11.2" height="4" rx="0.6" fill="#bcbcbc"/>
   <path d="M-2.6,-2.4 V8.8 A2.6,2.6 0 0 0 2.6,8.8 V-2.4" fill="#1a1a1a" stroke="#bcbcbc" stroke-width="1.8"/>
   <rect x="-5.1" y="-5.6" width="10.2" height="2.8" fill="#bcbcbc"/>
  </g>
 <g transform="translate(1428.7,983.0) rotate(45)">
   <rect x="-4.2" y="-13" width="8.4" height="10" rx="4" fill="#bcbcbc"/>
   <rect x="-5.6" y="-6.2" width="11.2" height="4" rx="0.6" fill="#bcbcbc"/>
   <path d="M-2.6,-2.4 V8.8 A2.6,2.6 0 0 0 2.6,8.8 V-2.4" fill="#1a1a1a" stroke="#bcbcbc" stroke-width="1.8"/>
   <rect x="-5.1" y="-5.6" width="10.2" height="2.8" fill="#bcbcbc"/>
  </g>
 <g transform="translate(1428.7,1074.2) rotate(45)">
   <rect x="-4.2" y="-13" width="8.4" height="10" rx="4" fill="#bcbcbc"/>
   <rect x="-5.6" y="-6.2" width="11.2" height="4" rx="0.6" fill="#bcbcbc"/>
   <path d="M-2.6,-2.4 V8.8 A2.6,2.6 0 0 0 2.6,8.8 V-2.4" fill="#1a1a1a" stroke="#bcbcbc" stroke-width="1.8"/>
   <rect x="-5.1" y="-5.6" width="10.2" height="2.8" fill="#bcbcbc"/>
  </g>
 <!-- minus plus -->
 <g fill="#c4c4c4">
  <rect x="1912.4" y="891.8" width="18" height="4.2" rx="0.8"/>
  <rect x="1943.7" y="891.8" width="18" height="4.2" rx="0.8"/><rect x="1950.6" y="884.7" width="4.2" height="18.7" rx="0.8"/>
  <rect x="1943.7" y="1028.3" width="18" height="4.2" rx="0.8"/><rect x="1950.6" y="1021.3" width="4.2" height="18" rx="0.8"/>
 </g>
 <!-- stroke type icons -->
 <g>
  <rect x="1827" y="925" width="23" height="22" fill="#525252"/>
  <rect x="1827" y="925" width="1.5" height="22" fill="#7a7a7a"/><rect x="1827" y="945.5" width="23" height="1.5" fill="#7a7a7a"/>
  <rect x="1840" y="924" width="11" height="11" fill="#1d1d1d"/>
  <rect x="1838.4" y="925" width="1.8" height="11.5" fill="#d0d0d0"/><rect x="1838.4" y="934.5" width="11.6" height="1.8" fill="#d0d0d0"/>
  <rect x="1836.8" y="933" width="4.5" height="4.5" fill="#d0d0d0"/>
 </g>
 <polyline points="1939.3,932.5 1945,938.2 1950.7,932.5" fill="none" stroke="#d0d0d0" stroke-width="1.6"/>
 <g>
  <rect x="1827" y="970" width="23" height="22" fill="#525252"/>
  <rect x="1827" y="970" width="1.5" height="22" fill="#7a7a7a"/><rect x="1827" y="990.5" width="23" height="1.5" fill="#7a7a7a"/>
  <rect x="1840" y="969" width="11" height="11" fill="#282828"/>
  <rect x="1838.4" y="970" width="1.8" height="11.5" fill="#d0d0d0"/><rect x="1838.4" y="979.5" width="11.6" height="1.8" fill="#d0d0d0"/>
  <rect x="1836.8" y="978" width="4.5" height="4.5" fill="#d0d0d0"/>
 </g>
 <polyline points="1939.3,977.5 1945,983.2 1950.7,977.5" fill="none" stroke="#4a4a4a" stroke-width="1.6"/>
 <!-- shadow swatch checker -->
 <g fill="#484848"><rect x="1345.6" y="1058" width="16" height="16"/><rect x="1377.6" y="1058" width="16" height="16"/><rect x="1361.6" y="1074" width="16" height="16"/><rect x="1393.6" y="1074" width="15.5" height="16"/></g>
</svg>


</body>
</html>
